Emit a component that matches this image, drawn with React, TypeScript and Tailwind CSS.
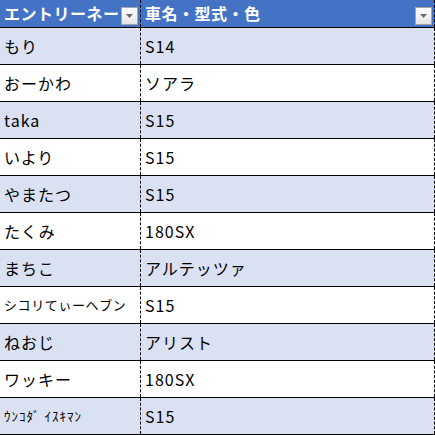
import React from 'react'

const rows: { name: string; car: string; small?: boolean; half?: boolean }[] = [
  { name: 'もり', car: 'S14' },
  { name: 'おーかわ', car: 'ソアラ' },
  { name: 'taka', car: 'S15' },
  { name: 'いより', car: 'S15' },
  { name: 'やまたつ', car: 'S15' },
  { name: 'たくみ', car: '180SX' },
  { name: 'まちこ', car: 'アルテッツァ' },
  { name: 'シコリてぃーヘブン', car: 'S15', small: true },
  { name: 'ねおじ', car: 'アリスト' },
  { name: 'ワッキー', car: '180SX' },
  { name: 'ｳﾝｺﾀﾞ ｲｽｷﾏﾝ', car: 'S15', half: true },
]

function FilterButton() {
  return (
    <div className="absolute right-[2px] top-[7px] w-[17px] h-[18px] border border-[#a6a6a6] bg-gradient-to-b from-white to-[#e4e4e4] flex items-center justify-center">
      <svg width="7" height="4" viewBox="0 0 7 4">
        <path d="M0 0 H7 L3.5 4 Z" fill="#6b6b6b" />
      </svg>
    </div>
  )
}

export default function App() {
  return (
    <div
      className="w-[435px] h-[435px] bg-white overflow-hidden text-black"
      style={{ fontFamily: '"Noto Sans CJK JP", "Noto Sans", sans-serif' }}
    >
      {/* Header */}
      <div className="flex h-[28px] bg-[#4472c4] border-b border-black text-white font-bold text-[16px]">
        <div className="relative w-[141px] border-r border-dashed border-black overflow-hidden">
          <div className="pl-1 leading-[27px] whitespace-nowrap tracking-[0.5px]">エントリーネーム</div>
          <div className="absolute right-0 top-0 h-full w-[20px] bg-[#4472c4]" />
          <FilterButton />
        </div>
        <div className="relative w-[294px] border-r border-dashed border-black">
          <div className="pl-1 leading-[27px] whitespace-nowrap tracking-[0.5px]">車名・型式・色</div>
          <FilterButton />
        </div>
      </div>

      {rows.map((r, i) => (
        <div
          key={i}
          className={`flex h-[37px] border-b border-black ${i % 2 === 0 ? 'bg-[#d9e1f2]' : 'bg-white'}`}
        >
          <div className="w-[141px] border-r border-dashed border-black flex items-center pl-1 overflow-hidden whitespace-nowrap">
            {r.small ? (
              <span className="text-[13px] tracking-[0.6px]">{r.name}</span>
            ) : r.half ? (
              <span className="text-[13px] tracking-[1px]">{r.name}</span>
            ) : (
              <span className="text-[16px] tracking-[1px]">{r.name}</span>
            )}
          </div>
          <div className="w-[294px] border-r border-dashed border-black flex items-center pl-1 whitespace-nowrap">
            <span className="text-[16px] tracking-[1px]">{r.car}</span>
          </div>
        </div>
      ))}
    </div>
  )
}
